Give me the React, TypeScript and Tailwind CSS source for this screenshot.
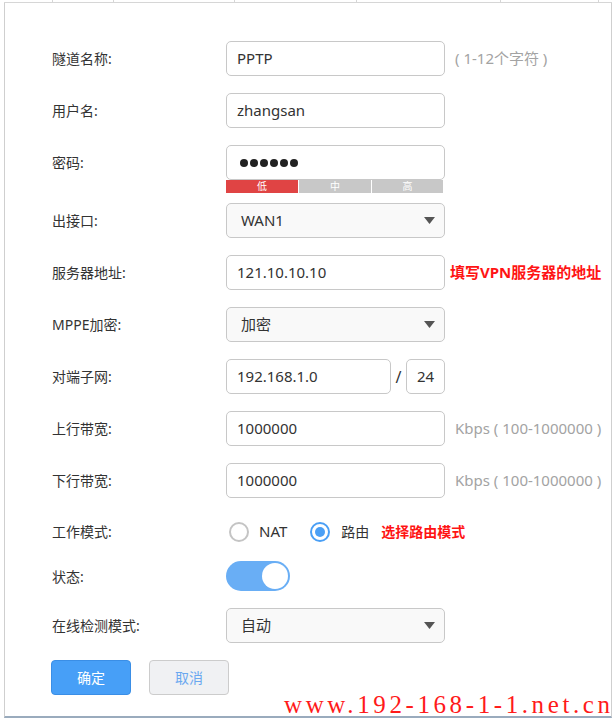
import React from 'react';

const font = "font-['Noto_Sans','Noto_Sans_CJK_SC',sans-serif]";

const Label = ({ children }: { children: React.ReactNode }) => (
  <div className="w-[174px] shrink-0 text-[14px] text-[#333]">{children}</div>
);

const TextBox = ({ value, className = 'w-[219px]' }: { value: string; className?: string }) => (
  <div
    className={`${className} h-[35px] flex items-center px-[10px] border border-[#c8c8c8] rounded-[5px] bg-white text-[15px] text-[#333]`}
  >
    {value}
  </div>
);

const SelectBox = ({ value }: { value: string }) => (
  <div className="w-[219px] h-[35px] flex items-center justify-between pl-[14px] pr-[9px] border border-[#c8c8c8] rounded-[5px] bg-[#f9f9f9] text-[15px] text-[#333]">
    <span>{value}</span>
    <svg width="11" height="7" viewBox="0 0 11 7">
      <path d="M0 0 H11 L5.5 7 Z" fill="#555" />
    </svg>
  </div>
);

const Hint = ({ children }: { children: React.ReactNode }) => (
  <span className="ml-[10px] text-[15px] text-[#a3a3a3]">{children}</span>
);

const Note = ({ children, className = 'ml-[5px] text-[15px]' }: { children: React.ReactNode; className?: string }) => (
  <span className={`${className} font-bold text-[#ff1414]`}>{children}</span>
);

const Row = ({ label, className, children }: { label: string; className: string; children: React.ReactNode }) => (
  <div className={`flex items-center ${className}`}>
    <Label>{label}</Label>
    <div className="flex items-center">{children}</div>
  </div>
);

const Radio = ({ checked }: { checked?: boolean }) =>
  checked ? (
    <span className="block w-[20px] h-[20px] rounded-full border-2 border-[#4a9ff5] flex items-center justify-center">
      <span className="block w-[10px] h-[10px] rounded-full bg-[#4a9ff5]" />
    </span>
  ) : (
    <span className="block w-[20px] h-[20px] rounded-full border-2 border-[#c4c4c4]" />
  );

export default function App() {
  const dividers = [52, 113, 234, 356, 500, 598];
  return (
    <div className={`relative w-[616px] h-[721px] overflow-hidden bg-white ${font}`}>
      {/* cut-off table row above the form */}
      <div className="relative ml-[4px] w-[608px] h-[3px] border-b border-[#d6d6d6]">
        {dividers.map((x) => (
          <span key={x} className="absolute top-0 h-[3px] w-px bg-[#d6d6d6]" style={{ left: x - 4 }} />
        ))}
      </div>

      <div className="ml-[4px] w-[608px] h-[715px] border-l border-r border-b-2 border-l-[#cfcfcf] border-r-[#cfcfcf] border-b-[#9aabbd] pl-[47px] flex flex-col">
        <Row label="隧道名称:" className="mt-[38px]">
          <TextBox value="PPTP" />
          <Hint>( 1-12个字符 )</Hint>
        </Row>

        <Row label="用户名:" className="mt-[17px]">
          <TextBox value="zhangsan" />
        </Row>

        <div className="mt-[17px] flex">
          <div className="w-[174px] h-[35px] flex items-center">
            <Label>密码:</Label>
          </div>
          <div className="flex flex-col">
            <div className="w-[219px] h-[35px] flex items-center gap-[2px] px-[13px] border border-[#c8c8c8] rounded-[5px] bg-white">
              {[0, 1, 2, 3, 4, 5].map((i) => (
                <span key={i} className="block w-[8px] h-[8px] rounded-full bg-[#222]" />
              ))}
            </div>
            <div className="w-[217px] h-[13px] flex text-[10px] leading-[13px] text-white">
              <div className="w-[72px] bg-[#e04444] text-center">低</div>
              <div className="w-[72px] ml-px bg-[#c8c8c8] text-center">中</div>
              <div className="flex-1 ml-px bg-[#c8c8c8] text-center">高</div>
            </div>
          </div>
        </div>

        <Row label="出接口:" className="mt-[10px]">
          <SelectBox value="WAN1" />
        </Row>

        <Row label="服务器地址:" className="mt-[17px]">
          <TextBox value="121.10.10.10" />
          <Note>填写VPN服务器的地址</Note>
        </Row>

        <Row label="MPPE加密:" className="mt-[17px]">
          <SelectBox value="加密" />
        </Row>

        <Row label="对端子网:" className="mt-[17px]">
          <TextBox value="192.168.1.0" className="w-[165px]" />
          <span className="w-[15px] text-center text-[16px] text-[#333]">/</span>
          <div className="w-[39px] h-[35px] flex items-center justify-center border border-[#c8c8c8] rounded-[5px] text-[15px] text-[#333]">
            24
          </div>
        </Row>

        <Row label="上行带宽:" className="mt-[17px]">
          <TextBox value="1000000" />
          <Hint>Kbps ( 100-1000000 )</Hint>
        </Row>

        <Row label="下行带宽:" className="mt-[17px]">
          <TextBox value="1000000" />
          <Hint>Kbps ( 100-1000000 )</Hint>
        </Row>

        <Row label="工作模式:" className="mt-[16px] h-[35px]">
          <span className="ml-[3px]">
            <Radio />
          </span>
          <span className="ml-[10px] text-[15px] text-[#333]">NAT</span>
          <span className="ml-[23px]">
            <Radio checked />
          </span>
          <span className="ml-[11px] text-[14px] text-[#333]">路由</span>
          <Note className="ml-[12px] text-[14px]">选择路由模式</Note>
        </Row>

        <Row label="状态:" className="mt-[12px] h-[30px]">
          <div className="w-[64px] h-[30px] rounded-full bg-[#69aef5] flex items-center justify-end pr-[2px]">
            <span className="block w-[26px] h-[26px] rounded-full bg-white" />
          </div>
        </Row>

        <Row label="在线检测模式:" className="mt-[17px]">
          <SelectBox value="自动" />
        </Row>

        <div className="mt-[17px] -ml-px flex gap-[18px]">
          <button className="w-[80px] h-[35px] rounded-[4px] bg-[#479ff7] border border-[#3a8ee6] text-white text-[14px]">
            确定
          </button>
          <button className="w-[80px] h-[35px] rounded-[4px] bg-[#f0f1f3] border border-[#cccccc] text-[#6aa8f0] text-[14px]">
            取消
          </button>
        </div>
      </div>

      {/* watermark */}
      <div className="absolute left-[284px] top-[691px] text-[25px] leading-[28px] tracking-[3.6px] text-[#ff1a1a] font-['Liberation_Serif',serif] whitespace-nowrap">
        www.192-168-1-1.net.cn
      </div>
    </div>
  );
}
